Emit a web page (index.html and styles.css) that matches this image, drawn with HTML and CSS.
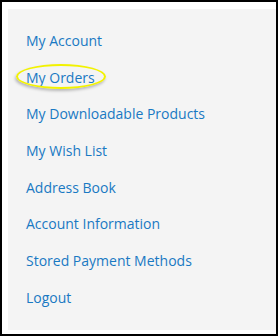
FILE: index.html
```html
<!DOCTYPE html>
<html lang="en">
<head>
    <meta charset="UTF-8">
    <meta name="viewport" content="width=device-width, initial-scale=1.0">
    <title>My Account</title>
    <link rel="stylesheet" href="styles.css">
</head>
<body>
    <div class="frame">
        <div class="sidebar">
            <ul class="nav">
                <li><a href="#">My Account</a></li>
                <li class="marked"><a href="#">My Orders</a></li>
                <li><a href="#">My Downloadable Products</a></li>
                <li><a href="#">My Wish List</a></li>
                <li><a href="#">Address Book</a></li>
                <li><a href="#">Account Information</a></li>
                <li><a href="#">Stored Payment Methods</a></li>
                <li><a href="#">Logout</a></li>
            </ul>
        </div>
    </div>
</body>
</html>
```

FILE: styles.css
```css
body {
    margin: 0;
    font-family: "Open Sans", Arial, sans-serif;
}

.frame {
    width: 278px;
    height: 336px;
    box-sizing: border-box;
    border: 2px solid #000;
    background-color: #fff;
    padding: 7px 0 4px 6px;
}

.sidebar {
    height: 100%;
    background-color: #f4f4f4;
    padding: 21px 0 0 18px;
    box-sizing: border-box;
}

.nav {
    list-style: none;
    margin: 0;
    padding: 0;
}

.nav li {
    height: 36.7px;
    line-height: 20px;
}

.nav a {
    color: #1979c3;
    font-size: 14px;
    text-decoration: none;
}

.marked {
    position: relative;
}

/* highlight ring drawn over the link */
.marked::after {
    content: "";
    position: absolute;
    left: -10px;
    top: -3px;
    width: 86px;
    height: 21px;
    border: 2px solid #f2f200;
    border-radius: 50%;
    box-shadow: -1px 2px 3px rgba(0, 0, 0, 0.25);
}
```
